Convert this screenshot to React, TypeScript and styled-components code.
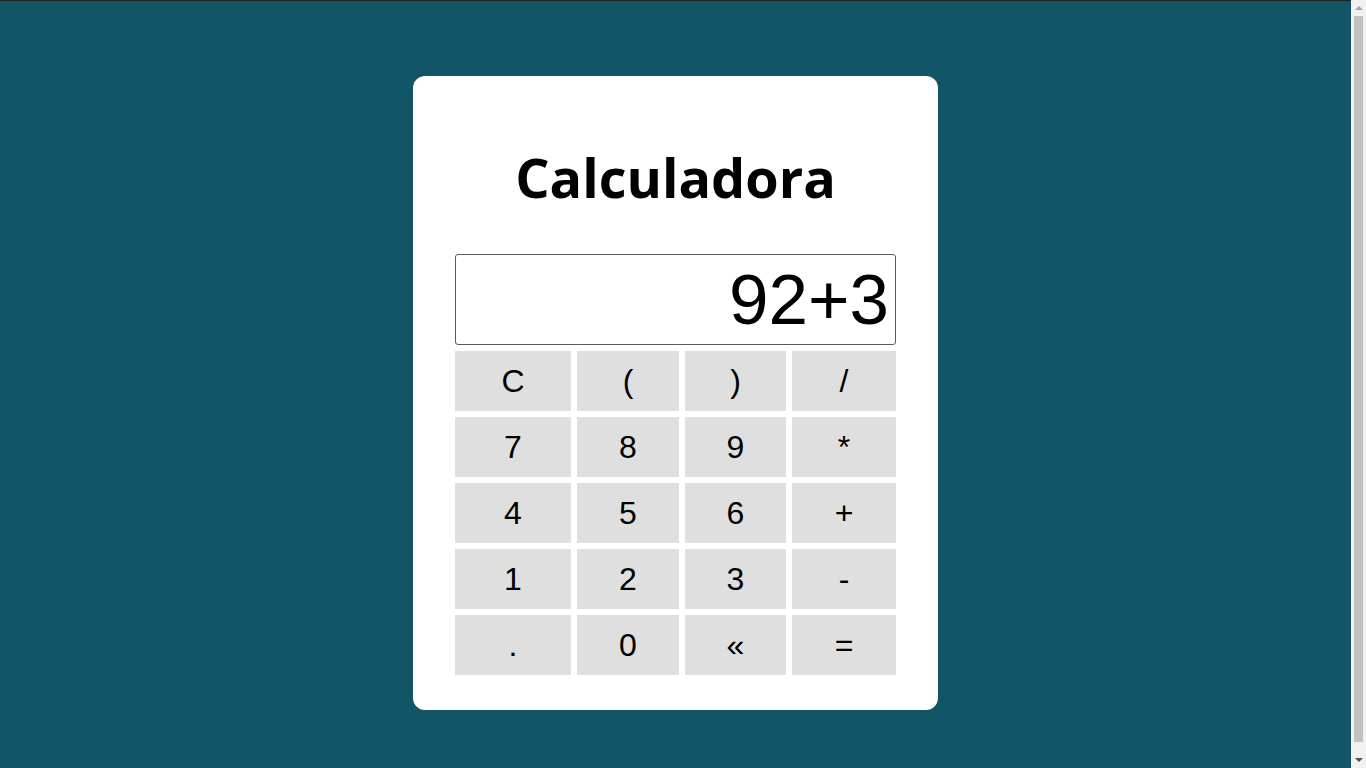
import React, { useState } from "react";
import styled, { createGlobalStyle } from "styled-components";

const GlobalStyle = createGlobalStyle`
  html, body {
    margin: 0;
    padding: 0;
    background: #125566;
  }
  * { box-sizing: border-box; }
`;

const Page = styled.div`
  border-top: 1px solid #1f2326;
  padding: 75px 15px 76px 0;
  display: flex;
  justify-content: center;
  background: #125566;
`;

const Card = styled.div`
  width: 525px;
  background: #ffffff;
  border-radius: 12px;
  padding: 64px 42px 35px;
  display: flex;
  flex-direction: column;
`;

const Title = styled.h1`
  margin: 0 0 40px;
  font-family: "Open Sans", sans-serif;
  font-weight: 700;
  font-size: 54px;
  line-height: 74px;
  text-align: center;
  color: #000;
`;

const Display = styled.input`
  display: block;
  width: 441px;
  height: 91px;
  margin: 0 0 6px;
  padding: 1px 6px;
  border: 1px solid #5a5a5a;
  border-radius: 3px;
  font-family: "Liberation Sans", Arial, sans-serif;
  font-size: 71px;
  text-align: right;
  color: #000;
  background: #fff;
  outline: none;
`;

const Keypad = styled.div`
  display: grid;
  grid-template-columns: 116px 102px 101px 104px;
  grid-auto-rows: 60px;
  gap: 6px;
`;

const Key = styled.button`
  border: none;
  margin: 0;
  padding: 0;
  background: #dfdfdf;
  color: #000;
  font-family: "Liberation Sans", Arial, sans-serif;
  font-size: 32px;
  display: flex;
  align-items: center;
  justify-content: center;
  cursor: pointer;
`;

const ScrollTrack = styled.div`
  position: fixed;
  top: 0;
  right: 0;
  width: 15px;
  height: 100vh;
  background: #f1f1f1;
  display: flex;
  flex-direction: column;
  align-items: center;
  padding: 5px 0;
`;

const Arrow = styled.div<{ $down?: boolean; $dim?: boolean }>`
  width: 0;
  height: 0;
  border-left: 4px solid transparent;
  border-right: 4px solid transparent;
  ${(p) =>
    p.$down
      ? `border-top: 4px solid ${p.$dim ? "#a3a3a3" : "#505050"};`
      : `border-bottom: 4px solid ${p.$dim ? "#a3a3a3" : "#505050"};`}
  margin: 1px 0;
`;

const Thumb = styled.div`
  flex: 1;
  width: 9px;
  margin: 5px 0 15px;
  background: #c1c1c1;
`;

const keys = [
  "C", "(", ")", "/",
  "7", "8", "9", "*",
  "4", "5", "6", "+",
  "1", "2", "3", "-",
  ".", "0", "«", "=",
];

export default function App() {
  const [value, setValue] = useState("92+3");

  const press = (k: string) => {
    if (k === "C") setValue("");
    else if (k === "«") setValue((v) => v.slice(0, -1));
    else if (k === "=") {
      try {
        // eslint-disable-next-line no-new-func
        const r = Function(`return (${value})`)();
        setValue(String(r));
      } catch {
        setValue("Error");
      }
    } else setValue((v) => v + k);
  };

  return (
    <>
      <GlobalStyle />
      <Page>
        <Card>
          <Title>Calculadora</Title>
          <Display value={value} readOnly />
          <Keypad>
            {keys.map((k) => (
              <Key key={k} onClick={() => press(k)}>
                {k}
              </Key>
            ))}
          </Keypad>
        </Card>
      </Page>
      <ScrollTrack aria-hidden>
        <Arrow $dim />
        <Thumb />
        <Arrow $down />
      </ScrollTrack>
    </>
  );
}
